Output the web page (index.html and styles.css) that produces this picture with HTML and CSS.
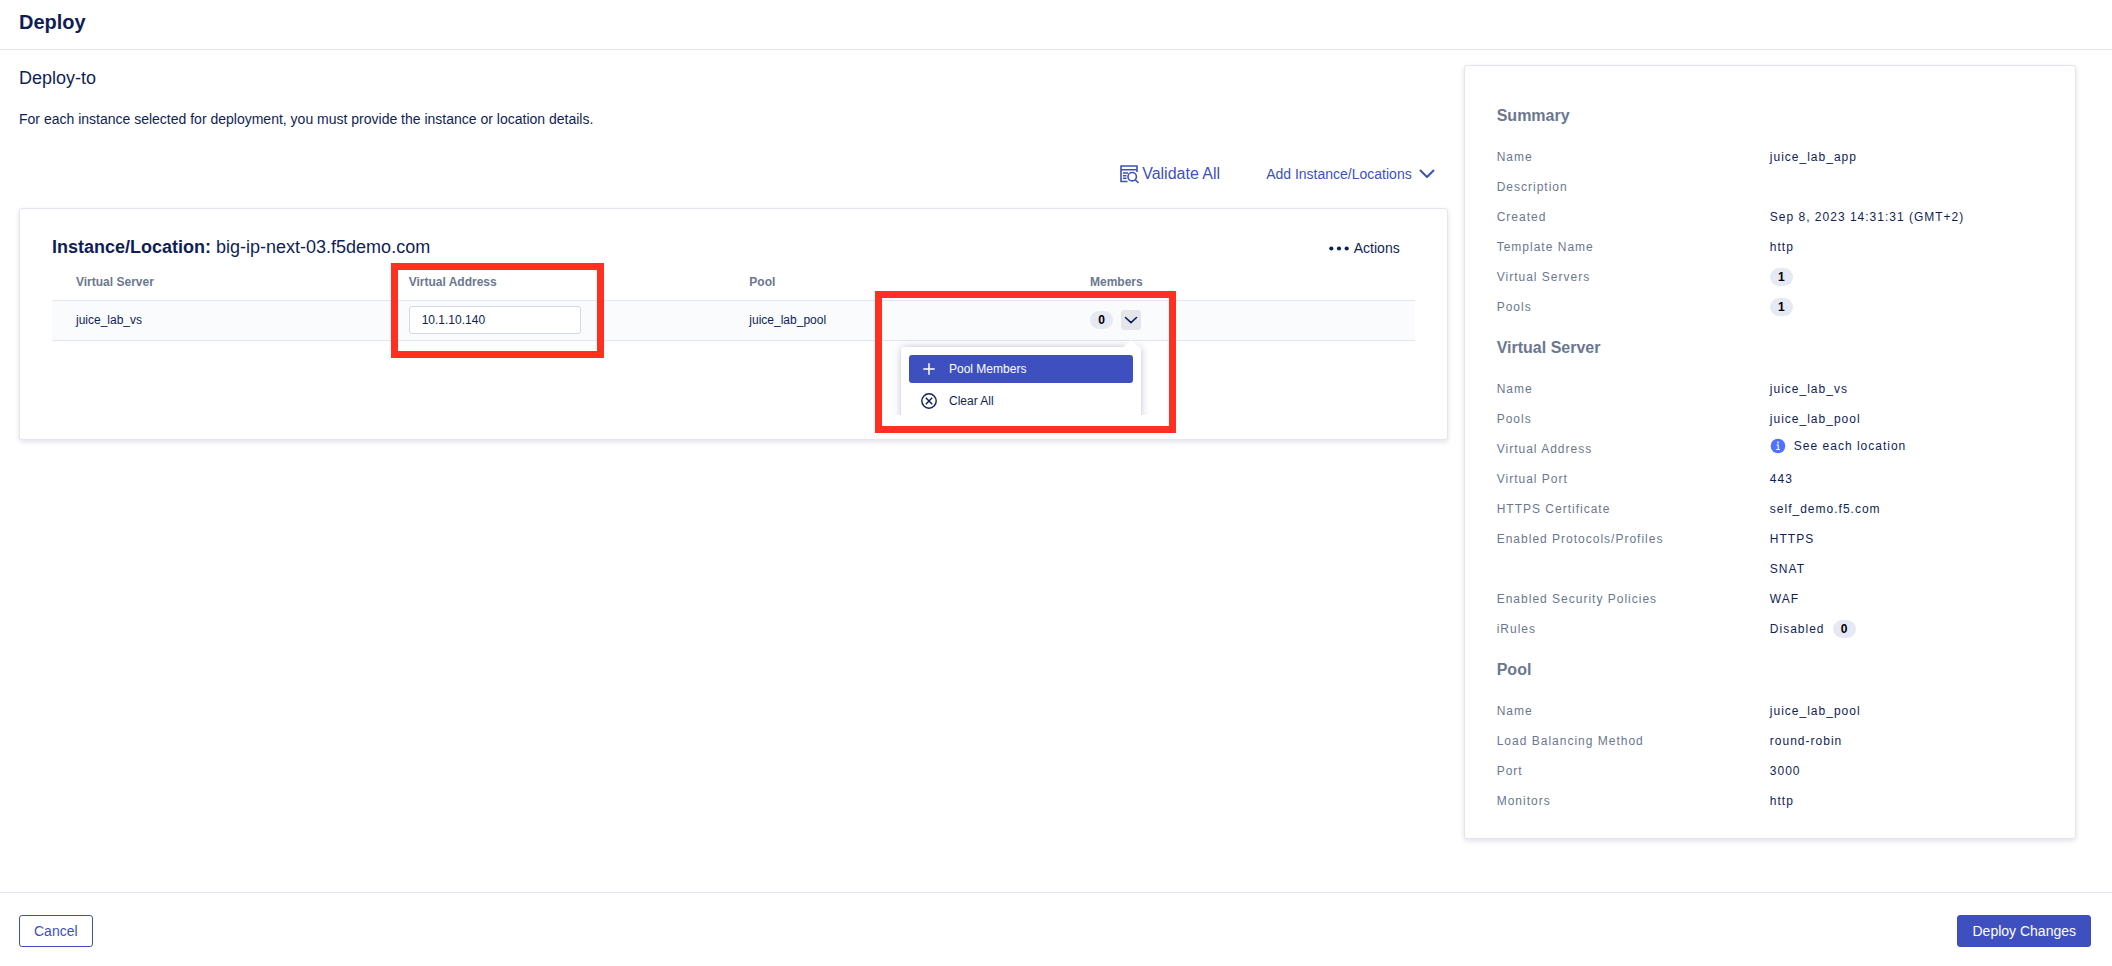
FILE: index.html
```html
<!DOCTYPE html>
<html lang="en">
<head>
<meta charset="utf-8">
<title>Deploy</title>
<link rel="stylesheet" href="styles.css">
</head>
<body>
<header class="page-header"><h1 class="page-title">Deploy</h1></header>

<main class="content">
  <section class="deploy">
    <h2 class="deploy-title">Deploy-to</h2>
    <p class="deploy-text">For each instance selected for deployment, you must provide the instance or location details.</p>

    <div class="toolbar">
      <button class="link-button validate" type="button">
        <svg class="icon" width="19" height="19" viewBox="0 0 19 19" fill="none" stroke="currentColor" stroke-width="1.6" aria-hidden="true">
          <path d="M17 7V1H1v15.500h6.500"/><path d="M1 4.700h16M3 8h5M3 10.700h3.500M3 13.300h3.500"/><circle cx="12.200" cy="11.700" r="4.200"/><path d="M15.200 14.700l3.300 3.300"/>
        </svg>
        Validate All
      </button>
      <button class="link-button add" type="button">
        Add Instance/Locations
        <svg class="icon" width="16" height="10" viewBox="0 0 16 10" fill="none" stroke="currentColor" stroke-width="2" stroke-linecap="round" stroke-linejoin="round" aria-hidden="true"><path d="M1.500 1.500L8 8l6.500-6.500"/></svg>
      </button>
    </div>

    <article class="card instance">
      <div class="instance-head">
        <h3 class="instance-title"><b>Instance/Location:</b> big-ip-next-03.f5demo.com</h3>
        <button class="actions" type="button">
          <svg width="20" height="5" viewBox="0 0 20 5" fill="currentColor" aria-hidden="true"><circle cx="2.300" cy="2.500" r="2.100"/><circle cx="10" cy="2.500" r="2.100"/><circle cx="17.700" cy="2.500" r="2.100"/></svg>
          Actions
        </button>
      </div>
      <table class="servers">
        <thead>
          <tr><th scope="col">Virtual Server</th><th scope="col"><label for="address">Virtual Address</label></th><th scope="col">Pool</th><th scope="col">Members</th></tr>
        </thead>
        <tbody>
          <tr>
            <td>juice_lab_vs</td>
            <td>
              <div class="address">
                <input class="address-input" id="address" type="text" value="10.1.10.140">
                <span class="highlight highlight-address"></span>
              </div>
            </td>
            <td>juice_lab_pool</td>
            <td>
              <div class="members">
                <span class="badge">0</span>
                <button class="toggle" type="button" aria-label="Member options" aria-expanded="true">
                  <svg width="14" height="8" viewBox="0 0 14 8" fill="none" stroke="currentColor" stroke-width="1.600" stroke-linecap="round" stroke-linejoin="round" aria-hidden="true"><path d="M1.500 1.500L7 6.700l5.500-5.200"/></svg>
                </button>
                <div class="menu-clip">
                  <div class="menu">
                    <button class="menu-item selected" type="button">
                      <svg width="16" height="16" viewBox="0 0 16 16" fill="none" stroke="currentColor" stroke-width="1.500" aria-hidden="true"><path d="M8 2.300v11.400M2.300 8h11.400"/></svg>
                      Pool Members
                    </button>
                    <button class="menu-item" type="button">
                      <svg width="16" height="16" viewBox="0 0 16 16" fill="none" stroke="currentColor" stroke-width="1.400" aria-hidden="true"><circle cx="8" cy="8" r="7.200"/><path d="M4.800 4.800l6.400 6.400M11.200 4.800l-6.400 6.400"/></svg>
                      Clear All
                    </button>
                  </div>
                </div>
                <span class="highlight highlight-members"></span>
              </div>
            </td>
          </tr>
        </tbody>
      </table>
    </article>
  </section>

  <aside class="card summary">
    <section class="group">
      <h2 class="group-title">Summary</h2>
      <dl class="facts">
        <dt>Name</dt><dd>juice_lab_app</dd>
        <dt>Description</dt><dd></dd>
        <dt>Created</dt><dd>Sep 8, 2023 14:31:31 (GMT+2)</dd>
        <dt>Template Name</dt><dd>http</dd>
        <dt>Virtual Servers</dt><dd><span class="badge">1</span></dd>
        <dt>Pools</dt><dd><span class="badge">1</span></dd>
      </dl>
    </section>
    <section class="group">
      <h2 class="group-title">Virtual Server</h2>
      <dl class="facts">
        <dt>Name</dt><dd>juice_lab_vs</dd>
        <dt>Pools</dt><dd>juice_lab_pool</dd>
        <dt>Virtual Address</dt>
        <dd class="note">
          <svg width="16" height="16" viewBox="0 0 16 16" aria-hidden="true"><circle cx="8" cy="8" r="7.300" fill="#4f73ff"/><path d="M6.500 7h1.800v4.300M6.300 11.500h3.600" fill="none" stroke="#fff" stroke-width="1.100"/><circle cx="8" cy="4.500" r=".9" fill="#fff"/></svg>
          See each location
        </dd>
        <dt>Virtual Port</dt><dd>443</dd>
        <dt>HTTPS Certificate</dt><dd>self_demo.f5.com</dd>
        <dt>Enabled Protocols/Profiles</dt><dd>HTTPS</dd>
        <dd class="more">SNAT</dd>
        <dt>Enabled Security Policies</dt><dd>WAF</dd>
        <dt>iRules</dt><dd>Disabled <span class="badge">0</span></dd>
      </dl>
    </section>
    <section class="group">
      <h2 class="group-title">Pool</h2>
      <dl class="facts">
        <dt>Name</dt><dd>juice_lab_pool</dd>
        <dt>Load Balancing Method</dt><dd>round-robin</dd>
        <dt>Port</dt><dd>3000</dd>
        <dt>Monitors</dt><dd>http</dd>
      </dl>
    </section>
  </aside>
</main>

<footer class="page-footer">
  <button class="button outline" type="button">Cancel</button>
  <button class="button primary" type="button">Deploy Changes</button>
</footer>
</body>
</html>
```
FILE: styles.css
```css
:root {
  --navy: #0f1e57;
  --grey: #6b7790;
  --blue: #3e50c0;
  --line: #e4e5f0;
}
* { box-sizing: border-box; }
body {
  margin: 0;
  min-height: 100vh;
  display: flex;
  flex-direction: column;
  background: #fff;
  color: var(--navy);
  font: 14px/20px "Liberation Sans", Arial, sans-serif;
}
h1, h2, h3, p, dl, dd { margin: 0; }
button, input { font: inherit; color: inherit; }
button { background: none; border: 0; padding: 0; cursor: pointer; }
svg { flex: none; display: block; }

.page-header { padding: 8px 19px 13px; border-bottom: 1px solid var(--line); }
.page-title { font-size: 20px; line-height: 28px; }

.content {
  flex: 1;
  display: grid;
  grid-template-columns: minmax(0, 7fr) minmax(0, 3fr);
  align-items: start;
  gap: 16px;
  padding: 15px 36px 16px 19px;
}
.card {
  border: 1px solid var(--line);
  border-radius: 3px;
  background: #fff;
  box-shadow: 0 2px 5px rgba(20, 30, 90, .13);
}

.deploy-title { font-size: 18px; line-height: 26px; font-weight: 400; }
.deploy-text { margin-top: 18px; }
.toolbar {
  display: flex;
  justify-content: flex-end;
  align-items: center;
  gap: 46px;
  margin: 32px 13px 21px 0;
  line-height: 26px;
}
.link-button { display: flex; align-items: center; color: var(--blue); }
.validate { gap: 3px; font-size: 16px; }
.add { gap: 7px; }

.instance { padding: 24px 32px 98px; }
.instance-head { display: flex; justify-content: space-between; align-items: center; }
.instance-title { font-size: 18px; line-height: 28px; font-weight: 400; }
.actions { display: flex; align-items: center; gap: 5px; padding: 2px 15px 0 0; }
.servers {
  width: 100%;
  margin-top: 4px;
  table-layout: fixed;
  border-collapse: collapse;
  font-size: 12px;
}
.servers th, .servers td { padding: 0 16px; text-align: left; }
.servers th:first-child, .servers td:first-child { padding-left: 24px; }
.servers th { height: 35px; color: var(--grey); }
.servers td { height: 40px; background: #fafbfd; border: solid var(--line); border-width: 1px 0; }

.address { position: relative; width: 172px; }
.address-input {
  display: block;
  width: 100%;
  height: 28px;
  padding: 0 12px;
  border: 1px solid #d5d8e2;
  border-radius: 3px;
  background: #fff;
}
.members { position: relative; display: flex; align-items: center; gap: 8px; width: max-content; }
.badge {
  display: inline-block;
  min-width: 23px;
  padding: 0 8px;
  border-radius: 9px;
  background: #e6e8f4;
  color: #000;
  font-size: 12px;
  line-height: 18px;
  font-weight: 700;
  letter-spacing: 0;
  text-align: center;
}
.toggle { display: grid; place-items: center; width: 20px; height: 20px; border-radius: 3px; background: #e5e6ec; }

.menu-clip { position: absolute; top: 100%; right: -20px; padding: 17px 20px 0; height: 85px; overflow: hidden; }
.menu {
  position: relative;
  width: 240px;
  padding: 8px;
  border-radius: 3px;
  background: #fff;
  box-shadow: 0 0 8px rgba(20, 30, 90, .26);
}
.menu::before {
  content: "";
  position: absolute;
  top: -7px;
  right: 1px;
  border: solid transparent;
  border-width: 0 9px 8px;
  border-bottom-color: #fff;
}
.menu-item { display: flex; align-items: center; gap: 12px; width: 100%; height: 28px; padding: 0 12px; border-radius: 3px; }
.menu-item + .menu-item { margin-top: 4px; }
.selected { background: var(--blue); color: #fff; }

.highlight { position: absolute; border: 7px solid #ff3020; pointer-events: none; }
.highlight-address { inset: -43px -23px -24px -18px; }
.highlight-members { inset: -19px -35px -103px -215px; }

.summary { padding: 32px 32px 22px; font-size: 12px; }
.group + .group { margin-top: 8px; }
.group-title { margin-bottom: 8px; color: var(--grey); font-size: 16px; line-height: 36px; }
.facts { display: grid; grid-template-columns: 1fr 1fr; line-height: 30px; letter-spacing: 1px; }
.facts dt { grid-column: 1; color: var(--grey); }
.facts dd { display: flex; align-items: center; gap: 8px; height: 30px; }
.facts .more { grid-column: 2; }
.facts .note { align-items: flex-start; gap: 8px; line-height: 24px; }
.note svg { margin-top: 4px; }

.page-footer {
  display: flex;
  justify-content: space-between;
  padding: 22px 21px 19px 19px;
  border-top: 1px solid var(--line);
}
.button { height: 32px; padding: 0 14px; border: 1px solid var(--blue); border-radius: 3px; }
.outline { color: var(--blue); }
.primary { background: var(--blue); color: #fff; }
```
